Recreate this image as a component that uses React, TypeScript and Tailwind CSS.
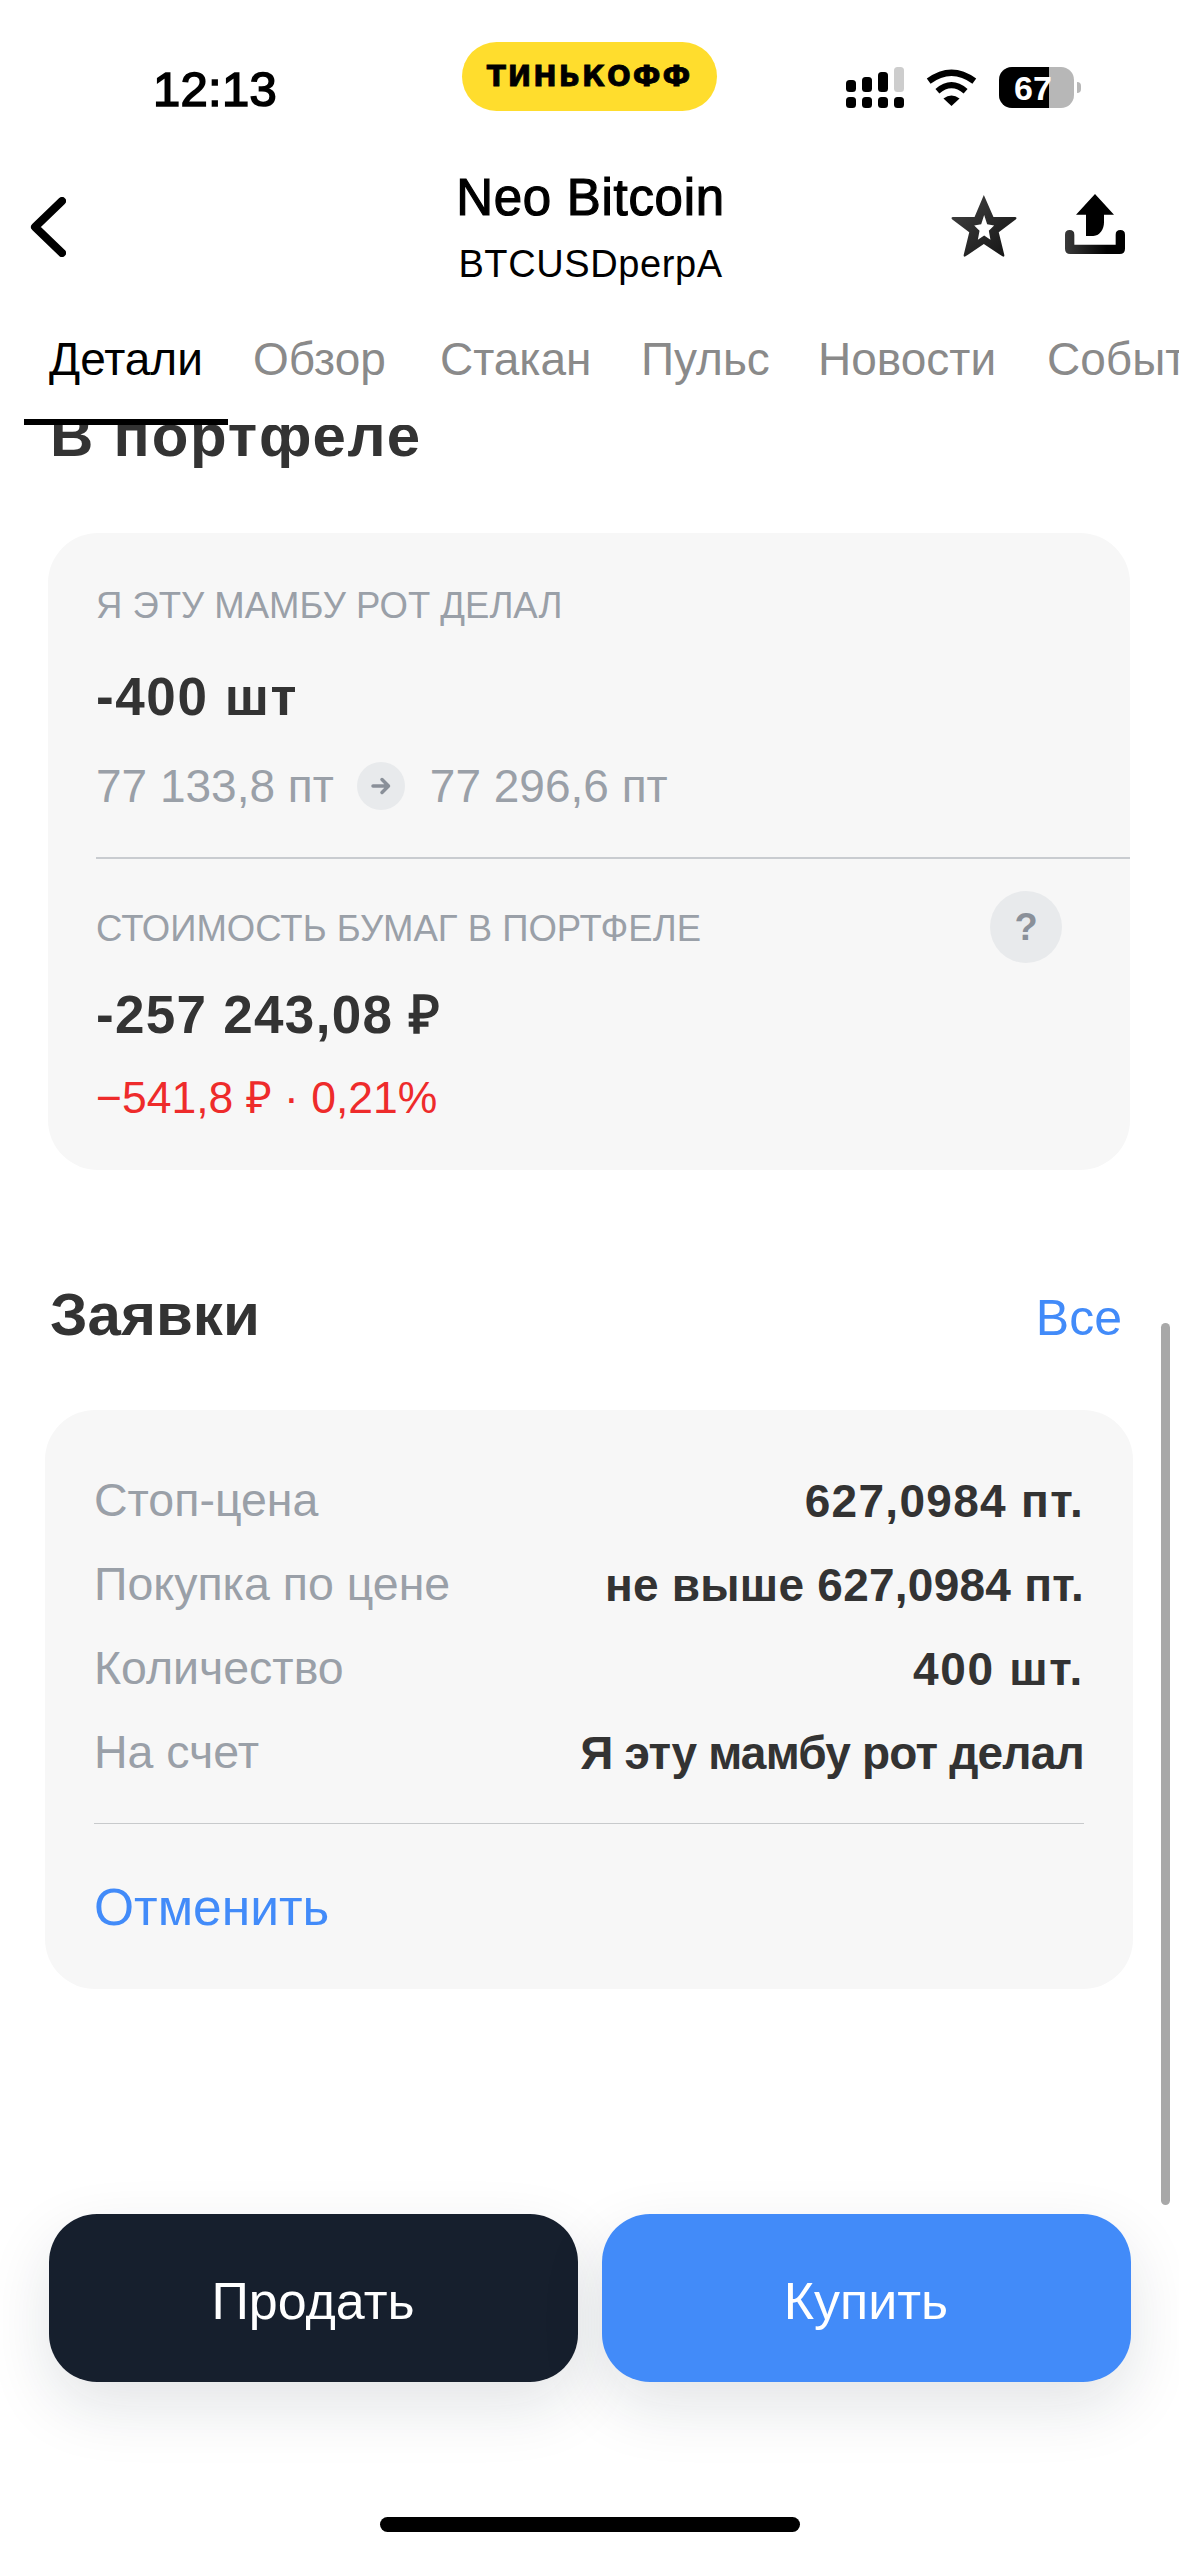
const font = { fontFamily: "'Liberation Sans', Arial, sans-serif" };

function Signal() {
  return (
    <svg width="58" height="41" viewBox="0 0 58 41" className="block">
      <rect x="0" y="13" width="10" height="12" rx="3.5" fill="#000" />
      <rect x="16" y="10" width="10" height="15" rx="3.5" fill="#000" />
      <rect x="32" y="5" width="10" height="20" rx="3.5" fill="#000" />
      <rect x="48" y="0" width="10" height="25" rx="3.5" fill="#cdcdcd" />
      <rect x="0" y="30" width="10" height="11" rx="3.5" fill="#000" />
      <rect x="16" y="30" width="10" height="11" rx="3.5" fill="#000" />
      <rect x="32" y="30" width="10" height="11" rx="3.5" fill="#000" />
      <rect x="48" y="30" width="10" height="11" rx="3.5" fill="#000" />
    </svg>
  );
}

function Wifi() {
  return (
    <svg width="51" height="37" viewBox="0 0 152 110" className="block">
      <path d="M8 36 Q76 -14 144 36" fill="none" stroke="#000" strokeWidth="19" />
      <path d="M34 66 Q76 30 118 66" fill="none" stroke="#000" strokeWidth="18" />
      <path d="M76 110 L52 88 Q76 70 100 88 Z" fill="#000" />
    </svg>
  );
}

function Battery() {
  return (
    <div className="flex items-center gap-[3px]">
      <div className="relative w-[75px] h-[41px] rounded-[13px] overflow-hidden bg-[#b7b7b7]">
        <div className="h-full w-[50px] bg-black" />
        <span className="absolute left-[15px] top-0 h-full flex items-center text-white text-[34px] font-bold leading-none">
          67
        </span>
      </div>
      <div className="w-[4px] h-[11px] rounded-r-full bg-[#b7b7b7]" />
    </div>
  );
}

function Star() {
  return (
    <svg width="66" height="62" viewBox="0 0 197 187" className="block">
      <defs>
        <linearGradient id="st" x1="0" y1="0" x2="1" y2="1">
          <stop offset="0" stopColor="#444" />
          <stop offset="1" stopColor="#111" />
        </linearGradient>
      </defs>
      <path
        fillRule="evenodd"
        fill="url(#st)"
        d="M98 0 L127 66 H193 Q199 68 195 73 L143 112 L160 182 Q160 189 154 185 L98 148 L43 185 Q37 189 37 182 L54 112 L2 73 Q-2 68 4 66 H70 Z M99 60 L90 88 L69 92 L85 108 L80 135 L99 122 L118 135 L113 108 L129 92 L108 88 Z"
      />
    </svg>
  );
}

function Share() {
  return (
    <svg width="60" height="60" viewBox="0 0 180 180" className="block">
      <defs>
        <linearGradient id="sh" x1="0" y1="0" x2="1" y2="0">
          <stop offset="0" stopColor="#3a3a3a" />
          <stop offset="0.7" stopColor="#000" />
        </linearGradient>
      </defs>
      <path d="M90 0 L33 62 H63 V126 H85 C105 126 117 105 117 85 V62 H147 Z" fill="#000" />
      <path
        d="M0 122 Q0 108 14 108 Q28 108 28 122 V152 H152 V122 Q152 108 166 108 Q180 108 180 122 V164 Q180 180 164 180 H16 Q0 180 0 164 Z"
        fill="url(#sh)"
      />
    </svg>
  );
}

function Row({ label, value, track }: { label: string; value: string; track: string }) {
  return (
    <div className="flex justify-between items-center h-[84px]">
      <span className="text-[46.5px] text-[#9aa0a8]">{label}</span>
      <span className={`text-[46px] text-[#333333] font-bold ${track}`}>{value}</span>
    </div>
  );
}

export default function App() {
  const tabs = [
    { t: "Обзор", w: "w-[187px]" },
    { t: "Стакан", w: "w-[201px]" },
    { t: "Пульс", w: "w-[177px]" },
    { t: "Новости", w: "w-[229px]" },
    { t: "События", w: "w-[200px]" },
  ];
  return (
    <div className="relative w-[1179px] h-[2556px] bg-white overflow-hidden flex flex-col" style={font}>
      {/* status bar */}
      <div className="h-[150px] shrink-0 flex items-start">
        <div className="w-[462px] pl-[153px] pt-[61px] text-[49px] leading-[56px] tracking-[0.3px] text-black [-webkit-text-stroke:1.6px_#000]">12:13</div>
        <div
          className="mt-[42px] w-[255px] h-[69px] rounded-full bg-[#ffdd2d] flex items-center justify-center text-black text-[28px] font-bold tracking-[2px] [-webkit-text-stroke:0.8px_#000]"
          style={{ fontFamily: "'DejaVu Sans', sans-serif" }}
        >
          ТИНЬКОФФ
        </div>
        <div className="ml-[129px] mt-[67px]"><Signal /></div>
        <div className="ml-[22px] mt-[69px]"><Wifi /></div>
        <div className="ml-[22px] mt-[67px]"><Battery /></div>
      </div>

      {/* title bar */}
      <div className="h-[170px] shrink-0 flex items-start">
        <div className="w-[456px] pl-[30px] pt-[47px]">
          <svg width="36" height="60" viewBox="0 0 36 60" className="block">
            <path d="M32 4 L5 30 L32 56" fill="none" stroke="#000" strokeWidth="8" strokeLinecap="round" strokeLinejoin="round" />
          </svg>
        </div>
        <div className="w-[269px] flex flex-col items-center pt-[19px]">
          <div className="text-[51px] leading-[58px] tracking-[0.7px] text-black whitespace-nowrap [-webkit-text-stroke:1.2px_#000]">Neo Bitcoin</div>
          <div className="text-[38px] leading-[44px] tracking-[0.6px] mt-[15px] text-black whitespace-nowrap">BTCUSDperpA</div>
        </div>
        <div className="ml-[226px] mt-[45px]"><Star /></div>
        <div className="ml-[48px] mt-[44px]"><Share /></div>
      </div>

      {/* tabs */}
      <div className="relative z-10 h-[105px] shrink-0 flex items-start overflow-hidden">
        <div className="w-[253px] shrink-0 pl-[24px]">
          <div className="w-[204px] h-[105px] pl-[25px] border-b-[6px] border-black">
            <div className="text-[46px] leading-[60px] pt-[9px] box-content text-black whitespace-nowrap">Детали</div>
          </div>
        </div>
        {tabs.map((x) => (
          <div key={x.t} className={`${x.w} shrink-0 text-[46px] leading-[60px] pt-[9px] box-content text-[#8a8a8a] whitespace-nowrap`}>
            {x.t}
          </div>
        ))}
      </div>

      {/* scroll content */}
      <div className="flex-1 min-h-0 overflow-hidden flex flex-col">
        <div className="pl-[50px] -mt-[21px] text-[60px] leading-[64px] tracking-[1.8px] font-bold text-[#333333] shrink-0">В портфеле</div>

        <div className="mt-[65px] ml-[48px] w-[1082px] h-[637px] shrink-0 rounded-[50px] bg-[#f7f7f7] pl-[48px] flex flex-col">
          <div className="pt-[48px] box-content text-[36.5px] leading-[50px] text-[#9aa0a8] whitespace-nowrap">Я ЭТУ МАМБУ РОТ ДЕЛАЛ</div>
          <div className="mt-[36px] text-[53px] leading-[60px] tracking-[1.6px] font-bold text-[#333333]">-400 шт</div>
          <div className="mt-[34px] flex items-center text-[46px] leading-[50px] text-[#9aa0a8] h-[50px]">
            <span className="whitespace-nowrap">77 133,8 пт</span>
            <span className="w-[48px] h-[48px] ml-[23px] mr-[25px] rounded-full bg-[#e8eaec] flex items-center justify-center shrink-0">
              <svg width="24" height="24" viewBox="0 0 24 24" fill="none" stroke="#8a9099" strokeWidth="3.5" strokeLinecap="round" strokeLinejoin="round">
                <path d="M4 12h15M13 5.5l6.5 6.5L13 18.5" />
              </svg>
            </span>
            <span className="whitespace-nowrap">77 296,6 пт</span>
          </div>
          <div className="mt-[46px] h-[2px] bg-[#c9ccd0]" />
          <div className="mt-[32px] flex items-start justify-between pr-[68px]">
            <div className="pt-[13px] text-[36.5px] leading-[50px] text-[#9aa0a8] whitespace-nowrap">СТОИМОСТЬ БУМАГ В ПОРТФЕЛЕ</div>
            <div className="w-[72px] h-[72px] rounded-full bg-[#e8eaec] flex items-center justify-center text-[38px] font-bold text-[#8a9099]">?</div>
          </div>
          <div className="mt-[22px] text-[53px] leading-[60px] tracking-[1.3px] font-bold text-[#333333] whitespace-nowrap">-257 243,08 ₽</div>
          <div className="mt-[28px] text-[44.5px] leading-[50px] text-[#ee2b2b] whitespace-nowrap">−541,8 ₽ · 0,21%</div>
        </div>

        <div className="mt-[111px] pl-[50px] pr-[57px] flex items-baseline justify-between shrink-0 h-[64px]">
          <span className="text-[60px] leading-[64px] font-bold text-[#333333]">Заявки</span>
          <span className="text-[50px] text-[#428bf9]">Все</span>
        </div>

        <div className="mt-[65px] ml-[45px] w-[1088px] h-[579px] shrink-0 rounded-[50px] bg-[#f7f7f7] px-[49px] pt-[49px] flex flex-col">
          <Row label="Стоп-цена" value="627,0984 пт." track="tracking-[1.3px]" />
          <Row label="Покупка по цене" value="не выше 627,0984 пт." track="tracking-[0.25px]" />
          <Row label="Количество" value="400 шт." track="tracking-[1.7px]" />
          <Row label="На счет" value="Я эту мамбу рот делал" track="tracking-[-0.8px]" />
          <div className="mt-[28px] h-px bg-[#c8cacc]" />
          <div className="mt-[53px] text-[51.5px] leading-[60px] text-[#428bf9]">Отменить</div>
        </div>
      </div>

      {/* action buttons */}
      <div className="shrink-0 h-[342px] flex flex-col items-center">
        <div className="w-[1082px] flex gap-[24px]">
          <div className="flex-1 h-[168px] pt-[6px] rounded-[48px] bg-[#161f2d] flex items-center justify-center text-white text-[52px] shadow-[0_24px_64px_rgba(20,30,50,0.12)]">
            Продать
          </div>
          <div className="flex-1 h-[168px] pt-[6px] rounded-[48px] bg-[#428bf9] flex items-center justify-center text-white text-[52px] shadow-[0_24px_64px_rgba(20,30,50,0.12)]">
            Купить
          </div>
        </div>
        <div className="mt-[135px] w-[420px] h-[15px] rounded-full bg-black" />
      </div>

      {/* scroll indicator */}
      <div className="absolute left-[1161px] top-[1323px] w-[9px] h-[882px] rounded-full bg-[#a8a8a8]" />
    </div>
  );
}
